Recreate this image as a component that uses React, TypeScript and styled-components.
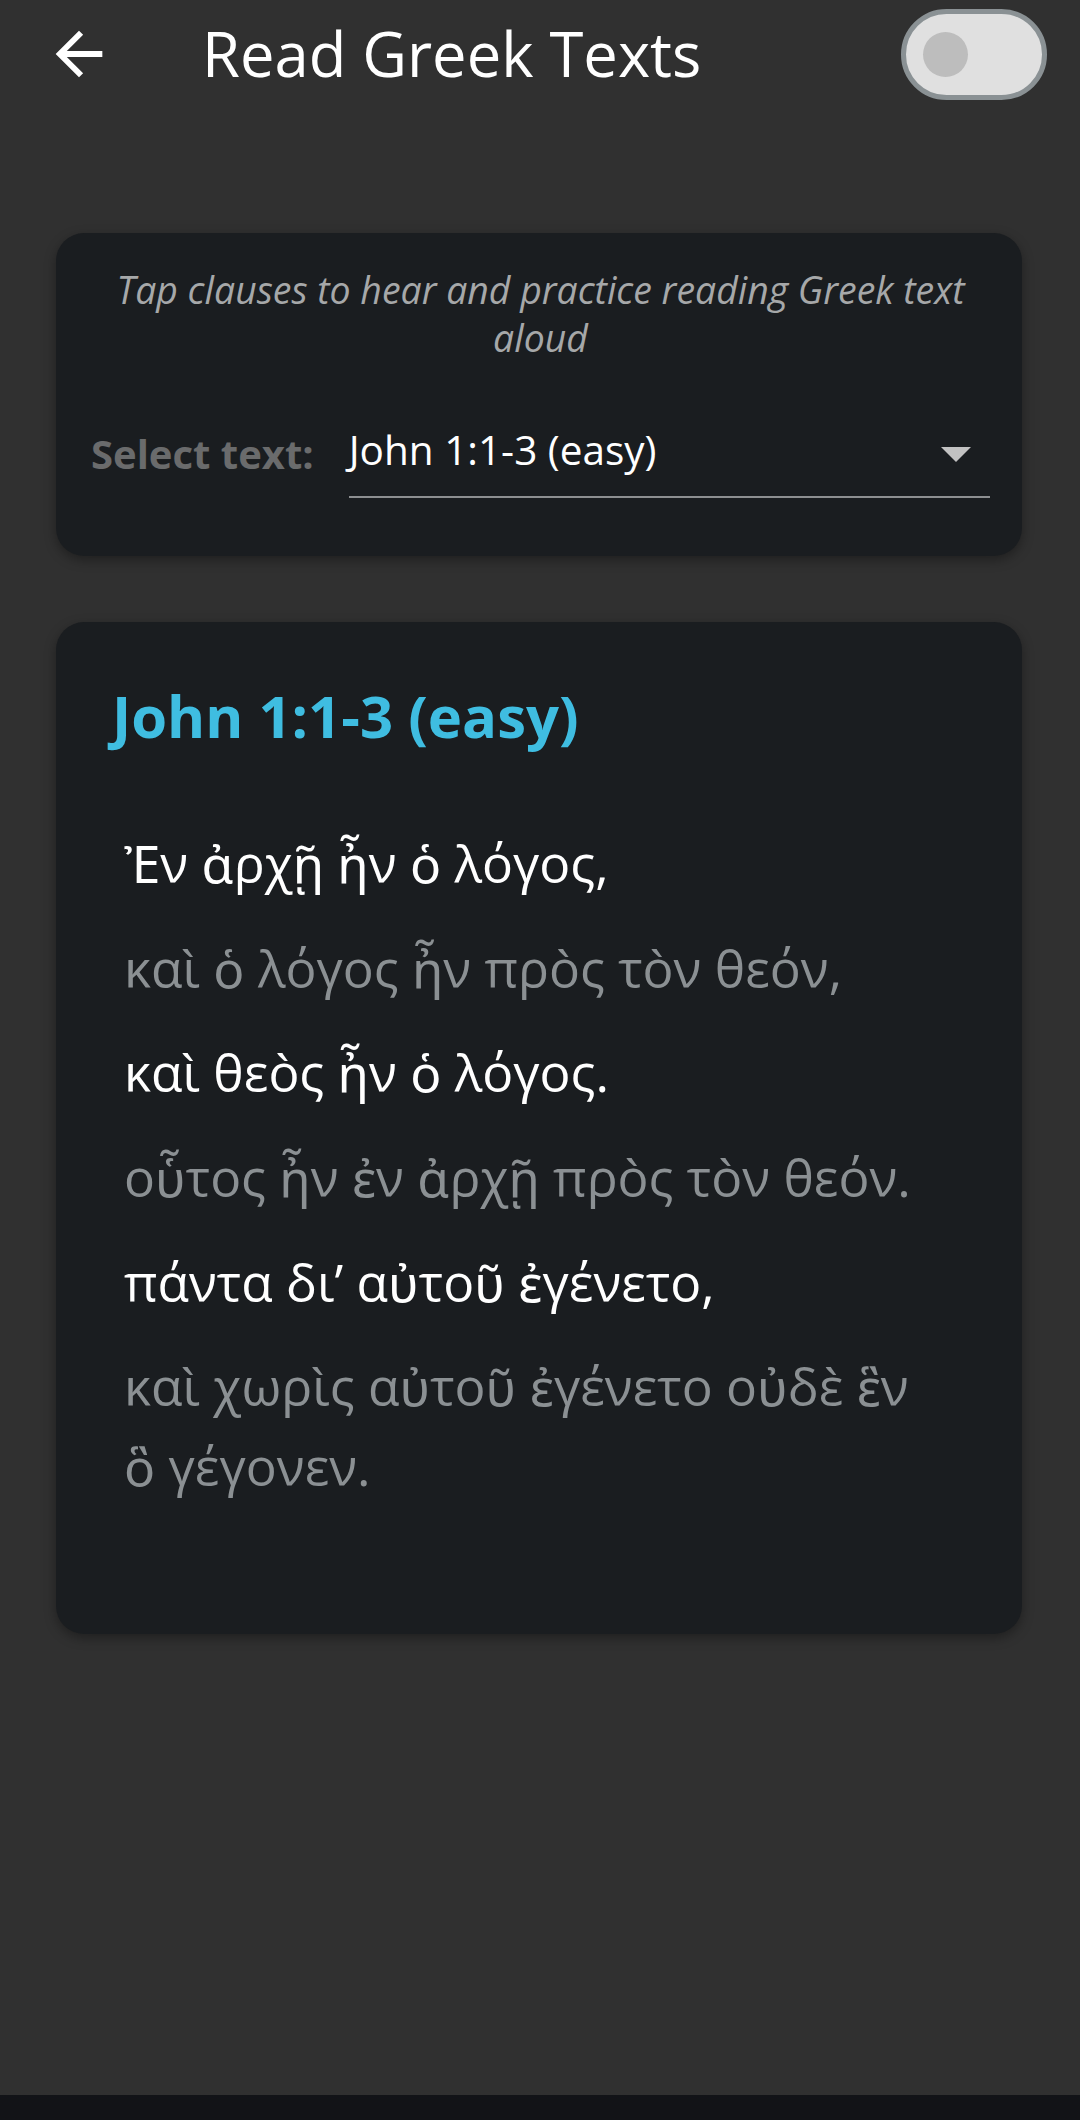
import React from 'react';
import styled, { createGlobalStyle } from 'styled-components';

const GlobalStyle = createGlobalStyle`
    html, body {
        margin: 0;
        padding: 0;
        background-color: #303030;
    }
    body {
        font-family: 'Open Sans', 'Noto Sans', sans-serif;
        color: #ffffff;
    }
`;

const Page = styled.div`
    display: flex;
    flex-direction: column;
    height: 2120px;
    background-color: #303030;
`;

const Toolbar = styled.header`
    display: flex;
    align-items: center;
    height: 108px;
    padding: 0 33px 0 44px;
`;

const BackButton = styled.button`
    display: flex;
    align-items: center;
    justify-content: center;
    width: 70px;
    height: 70px;
    padding: 0;
    border: none;
    background: none;
    color: #ffffff;
    cursor: pointer;
`;

const Title = styled.h1`
    flex: 1;
    margin: 0 0 0 88px;
    font-size: 61.5px;
    font-weight: 400;
    line-height: 1.2;
    color: #ffffff;
`;

const SwitchTrack = styled.div<{ on?: boolean }>`
    display: flex;
    align-items: center;
    box-sizing: border-box;
    width: 146px;
    height: 91px;
    padding-left: 17px;
    border: 5px solid #8a9194;
    border-radius: 46px;
    background-color: #e0e0e0;
    justify-content: ${(props) => (props.on ? 'flex-end' : 'flex-start')};
`;

const SwitchKnob = styled.div`
    width: 45px;
    height: 45px;
    border-radius: 50%;
    background-color: #bdbdbd;
`;

const Content = styled.main`
    flex: 1;
    padding: 125px 58px 0 56px;
`;

const Card = styled.section`
    background-color: #1a1d20;
    border-radius: 28px;
    box-shadow: 0 4px 12px rgba(0, 0, 0, 0.35);
`;

const IntroCard = styled(Card)`
    padding: 33px 32px 58px 35px;
`;

const Hint = styled.p`
    margin: 0;
    font-size: 37.4px;
    font-style: italic;
    line-height: 48px;
    text-align: center;
    color: #a6a8a9;
`;

const SelectRow = styled.div`
    display: flex;
    align-items: center;
    margin-top: 46px;
`;

const SelectLabel = styled.label`
    margin-right: 35px;
    font-size: 40px;
    font-weight: 700;
    color: #6a6b6c;
`;

const Dropdown = styled.div`
    flex: 1;
    display: flex;
    align-items: center;
    justify-content: space-between;
    box-sizing: border-box;
    height: 90px;
    padding: 0 19px 6px 0;
    border-bottom: 2px solid #8d8f91;
    font-size: 40.5px;
    color: #ffffff;
`;

const DropArrow = styled.svg`
    margin-top: 12px;
`;

const PassageCard = styled(Card)`
    margin-top: 66px;
    padding: 54px 80px 115px 53px;
`;

const PassageTitle = styled.h2`
    margin: 0 0 55px 3px;
    font-size: 58px;
    font-weight: 700;
    line-height: 80px;
    color: #3fbde1;
`;

const Clause = styled.p<{ muted?: boolean }>`
    margin: 0;
    padding: 12.3px 0 12.3px 15px;
    font-size: 51.5px;
    line-height: 80px;
    color: ${(props) => (props.muted ? '#8b9093' : '#ffffff')};
    cursor: pointer;
`;

const NavBar = styled.div`
    height: 25px;
    background-color: #121317;
`;

const clauses = [
    'Ἐν ἀρχῇ ἦν ὁ λόγος,',
    'καὶ ὁ λόγος ἦν πρὸς τὸν θεόν,',
    'καὶ θεὸς ἦν ὁ λόγος.',
    'οὗτος ἦν ἐν ἀρχῇ πρὸς τὸν θεόν.',
    'πάντα δι’ αὐτοῦ ἐγένετο,',
    'καὶ χωρὶς αὐτοῦ ἐγένετο οὐδὲ ἓν ὃ γέγονεν.',
];

const App = () => {
    return (
        <>
            <GlobalStyle />
            <Page>
                <Toolbar>
                    <BackButton aria-label="Back">
                        <svg width="70" height="70" viewBox="0 0 24 24">
                            <path
                                fill="currentColor"
                                d="M20 11H7.83l5.59-5.59L12 4l-8 8 8 8 1.41-1.41L7.83 13H20v-2z"
                            />
                        </svg>
                    </BackButton>
                    <Title>Read Greek Texts</Title>
                    <SwitchTrack>
                        <SwitchKnob />
                    </SwitchTrack>
                </Toolbar>
                <Content>
                    <IntroCard>
                        <Hint>
                            Tap clauses to hear and practice reading Greek text
                            aloud
                        </Hint>
                        <SelectRow>
                            <SelectLabel>Select text:</SelectLabel>
                            <Dropdown>
                                <span>John 1:1-3 (easy)</span>
                                <DropArrow width="30" height="16" viewBox="0 0 30 16">
                                    <path fill="#c2c2c2" d="M0 0h30L15 15z" />
                                </DropArrow>
                            </Dropdown>
                        </SelectRow>
                    </IntroCard>
                    <PassageCard>
                        <PassageTitle>John 1:1-3 (easy)</PassageTitle>
                        {clauses.map((text, i) => (
                            <Clause key={i} muted={i % 2 === 1}>
                                {text}
                            </Clause>
                        ))}
                    </PassageCard>
                </Content>
                <NavBar />
            </Page>
        </>
    );
};

export default App;
